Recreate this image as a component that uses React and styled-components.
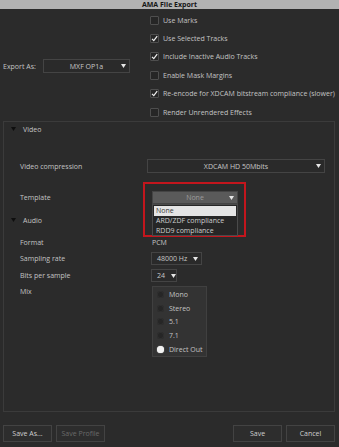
import React from "react";
import styled, { createGlobalStyle } from "styled-components";

const GlobalStyle = createGlobalStyle`
  html, body {
    margin: 0;
    padding: 0;
    background: #2b2b2b;
  }
  body {
    font-family: "Open Sans", "Liberation Sans", sans-serif;
    font-size: 7px;
    color: #c4c4c4;
  }
`;

const Window = styled.div`
  width: 339px;
  height: 447px;
  background: #2b2b2b;
  display: flex;
  flex-direction: column;
  overflow: hidden;
`;

const TitleBar = styled.div`
  height: 9px;
  background: #b2b2b2;
  color: #161616;
  font-weight: 700;
  font-size: 7px;
  line-height: 9px;
  text-align: center;
`;

const Top = styled.div`
  display: flex;
  padding-top: 2px;
`;

const ExportCol = styled.div`
  width: 150px;
  display: flex;
  align-items: center;
  padding-left: 3px;
  box-sizing: border-box;
`;

const ExportLabel = styled.span`
  width: 40px;
`;

const CheckCol = styled.div`
  display: flex;
  flex-direction: column;
`;

const CheckRow = styled.label`
  height: 18.4px;
  display: flex;
  align-items: center;
  gap: 4px;
  white-space: nowrap;
`;

const Box = styled.span`
  width: 7px;
  height: 7px;
  border: 1px solid #4e4e4e;
  background: #262626;
  border-radius: 1px;
  display: flex;
  align-items: center;
  justify-content: center;
`;

const Select = styled.div`
  height: ${(p) => p.$h || 13}px;
  width: ${(p) => p.$w}px;
  margin-left: ${(p) => p.$inset || 0}px;
  box-sizing: border-box;
  border: 1px solid #444;
  background: ${(p) => (p.$open ? "#5a5a5a" : "#2a2a2a")};
  color: ${(p) => (p.$open ? "#9c9c9c" : "#c8c8c8")};
  display: flex;
  align-items: center;
  justify-content: ${(p) => (p.$left ? "flex-start" : "center")};
  padding: 0 ${(p) => (p.$left ? 0 : 10)}px 0 ${(p) => (p.$left ? 5 : 10)}px;
  position: relative;
  gap: 6px;
`;

const ArrowSlot = styled.span`
  position: ${(p) => (p.$inline ? "static" : "absolute")};
  right: 3px;
  top: 50%;
  transform: ${(p) => (p.$inline ? "none" : "translateY(-50%)")};
  display: flex;
`;

const Panel = styled.div`
  margin: 0 4px 0 3px;
  height: 291px;
  box-sizing: border-box;
  border: 1px solid #3b3b3b;
  display: flex;
  flex-direction: column;
`;

const SectionHead = styled.div`
  height: 14px;
  margin-top: ${(p) => p.$mt || 0}px;
  display: flex;
  align-items: center;
  padding-left: 7px;
  gap: 7px;
`;

const Row = styled.div`
  display: grid;
  grid-template-columns: 132px 1fr;
  align-items: ${(p) => (p.$top ? "start" : "center")};
  margin-top: ${(p) => p.$mt || 0}px;
  min-height: ${(p) => p.$h || 13}px;
  padding-left: 16px;
`;

const Label = styled.span`
  padding-top: ${(p) => p.$pt || 0}px;
`;

const Anchor = styled.div`
  position: relative;
  width: ${(p) => p.$w}px;
`;

const Highlight = styled.div`
  position: absolute;
  left: -9px;
  top: -9px;
  width: 103px;
  height: 55px;
  box-sizing: border-box;
  border: 2px solid #c3161d;
  pointer-events: none;
`;

const Menu = styled.div`
  position: absolute;
  left: 0;
  top: 13px;
  width: 86px;
  height: 32px;
  box-sizing: border-box;
  border: 1px solid #4a4a4a;
  background: #262626;
  padding: 1px 1px;
  display: flex;
  flex-direction: column;
  z-index: 2;
`;

const MenuItem = styled.div`
  height: 9.6px;
  line-height: 9.6px;
  padding-left: 2px;
  background: ${(p) => (p.$active ? "#e4e4e4" : "transparent")};
  color: ${(p) => (p.$active ? "#3a3a3a" : "#cfcfcf")};
`;

const RadioBox = styled.div`
  width: 55px;
  height: 71px;
  box-sizing: border-box;
  border: 1px solid #404040;
  background: #333;
  display: flex;
  flex-direction: column;
  padding: 0 0 0 4px;
  justify-content: center;
`;

const RadioRow = styled.div`
  height: 14.2px;
  display: flex;
  align-items: center;
  gap: 5px;
`;

const Dot = styled.span`
  width: 7px;
  height: 7px;
  border-radius: 50%;
  background: ${(p) => (p.$on ? "#f2f2f2" : "#262626")};
  box-shadow: ${(p) => (p.$on ? "0 0 1px #fff" : "inset 0 0 0 1px #303030")};
`;

const Footer = styled.div`
  display: flex;
  margin-top: 13px;
  padding: 0 4px 0 3px;
  gap: 4px;
`;

const Spacer = styled.div`
  flex: 1;
`;

const Button = styled.button`
  width: 49px;
  height: 17px;
  box-sizing: border-box;
  border: 1px solid #434343;
  background: #2d2d2d;
  color: ${(p) => (p.disabled ? "#6a6a6a" : "#cfcfcf")};
  font-family: inherit;
  font-size: 7px;
  padding: 0;
`;

const Arrow = () => (
  <svg width="5" height="4" viewBox="0 0 5 4">
    <polygon points="0,0 5,0 2.5,4" fill="#e6e6e6" />
  </svg>
);

const Tri = () => (
  <svg width="5" height="4" viewBox="0 0 5 4">
    <polygon points="0,0 5,0 2.5,4" fill="#0e0e0e" />
  </svg>
);

const Check = () => (
  <svg width="7" height="7" viewBox="0 0 7 7">
    <path d="M1 3.8 L2.8 5.6 L6.2 1.2" stroke="#f0f0f0" strokeWidth="1.2" fill="none" />
  </svg>
);

const checks = [
  ["Use Marks", false],
  ["Use Selected Tracks", true],
  ["Include Inactive Audio Tracks", true],
  ["Enable Mask Margins", false],
  ["Re-encode for XDCAM bitstream compliance (slower)", true],
  ["Render Unrendered Effects", false],
];

const mixes = ["Mono", "Stereo", "5.1", "7.1", "Direct Out"];

export default function App() {
  return (
    <Window>
      <GlobalStyle />
      <TitleBar>AMA File Export</TitleBar>
      <Top>
        <ExportCol>
          <ExportLabel>Export As:</ExportLabel>
          <Select $w={87} $h={14}>
            MXF OP1a
            <ArrowSlot>
              <Arrow />
            </ArrowSlot>
          </Select>
        </ExportCol>
        <CheckCol>
          {checks.map(([text, on]) => (
            <CheckRow key={text}>
              <Box>{on && <Check />}</Box>
              {text}
            </CheckRow>
          ))}
        </CheckCol>
      </Top>
      <Panel>
        <SectionHead>
          <Tri />
          Video
        </SectionHead>
        <Row $mt={23} $h={14}>
          <Label>Video compression</Label>
          <Select $w={178} $h={14} $inset={-5}>
            XDCAM HD 50Mbits
            <ArrowSlot>
              <Arrow />
            </ArrowSlot>
          </Select>
        </Row>
        <Row $mt={18}>
          <Label>Template</Label>
          <Anchor $w={86}>
            <Select $w={86} $open>
              None
              <ArrowSlot>
                <Arrow />
              </ArrowSlot>
            </Select>
            <Menu>
              <MenuItem $active>None</MenuItem>
              <MenuItem>ARD/ZDF compliance</MenuItem>
              <MenuItem>RDD9 compliance</MenuItem>
            </Menu>
            <Highlight />
          </Anchor>
        </Row>
        <SectionHead $mt={9}>
          <Tri />
          Audio
        </SectionHead>
        <Row $mt={9} $h={12}>
          <Label>Format</Label>
          <span>PCM</span>
        </Row>
        <Row $mt={4}>
          <Label>Sampling rate</Label>
          <Select $w={51} $left $inset={-1}>
            48000 Hz
            <ArrowSlot $inline>
              <Arrow />
            </ArrowSlot>
          </Select>
        </Row>
        <Row $mt={4}>
          <Label>Bits per sample</Label>
          <Select $w={26} $left $inset={-1}>
            24
            <ArrowSlot $inline>
              <Arrow />
            </ArrowSlot>
          </Select>
        </Row>
        <Row $mt={4} $top>
          <Label $pt={1}>Mix</Label>
          <RadioBox>
            {mixes.map((m) => (
              <RadioRow key={m}>
                <Dot $on={m === "Direct Out"} />
                {m}
              </RadioRow>
            ))}
          </RadioBox>
        </Row>
      </Panel>
      <Footer>
        <Button>Save As...</Button>
        <Button disabled>Save Profile</Button>
        <Spacer />
        <Button>Save</Button>
        <Button>Cancel</Button>
      </Footer>
    </Window>
  );
}
